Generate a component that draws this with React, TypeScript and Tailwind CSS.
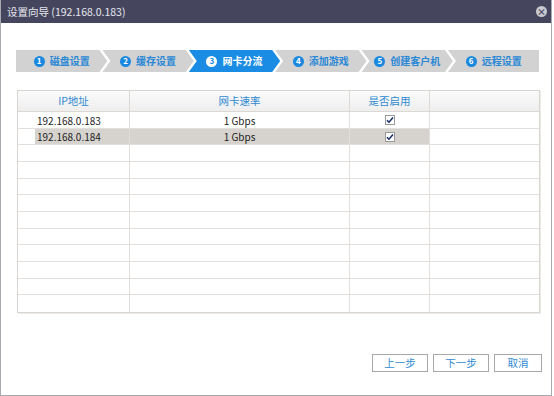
import React from 'react';

const FONT = { fontFamily: '"Noto Sans CJK SC", "Noto Sans", sans-serif' };

const steps = ['磁盘设置', '缓存设置', '网卡分流', '添加游戏', '创建客户机', '远程设置'];
const ACTIVE = 2;

const rows = [
  { ip: '192.168.0.183', speed: '1 Gbps', on: true },
  { ip: '192.168.0.184', speed: '1 Gbps', on: true },
];
const rowHeights = [17, 16, 17, 17, 16, 17, 17, 16, 17, 17, 16, 17];

function Check() {
  return (
    <span className="flex h-[10px] w-[10px] items-center justify-center border border-[#9a9a9a] bg-white">
      <svg width="8" height="8" viewBox="0 0 8 8">
        <path d="M1 4.2 L3 6.2 L7 1.6" fill="none" stroke="#1c2f6e" strokeWidth="1.6" />
      </svg>
    </span>
  );
}

function Step({ label, index }: { label: string; index: number }) {
  const active = index === ACTIVE;
  const first = index === 0;
  const last = index === steps.length - 1;
  const shape = first
    ? '[clip-path:polygon(0_0,calc(100%-8px)_0,100%_50%,calc(100%-8px)_100%,0_100%)]'
    : last
      ? '[clip-path:polygon(0_0,100%_0,100%_100%,0_100%,8px_50%)]'
      : '[clip-path:polygon(0_0,calc(100%-8px)_0,100%_50%,calc(100%-8px)_100%,0_100%,8px_50%)]';
  return (
    <div
      className={`flex h-[22px] w-[91.4px] shrink-0 items-center justify-center gap-[5px] ${first ? '' : '-ml-[5px]'} ${shape} ${
        active ? 'bg-[#1b8ce4]' : 'bg-[#d2d2d2]'
      }`}
    >
      <span
        className={`flex h-[11px] w-[11px] items-center justify-center rounded-full text-[8px] font-bold leading-none ${
          active ? 'bg-white text-[#1b8ce4]' : 'bg-[#1b88e0] text-white'
        }`}
      >
        {index + 1}
      </span>
      <span className={`text-[10px] font-bold leading-none ${active ? 'text-white' : 'text-[#2a88d6]'}`}>{label}</span>
    </div>
  );
}

export default function App() {
  return (
    <div className="h-[396px] w-[554px] bg-white" style={FONT}>
      <div className="flex h-[396px] w-[552px] flex-col border-b border-l border-r border-[#a9a9b0] bg-white">
        {/* title bar */}
        <div className="flex h-[23px] shrink-0 items-center justify-between bg-[#45465e] pl-[6px] pr-[4px]">
          <span className="text-[10.5px] text-[#e6e6ee]">设置向导 (192.168.0.183)</span>
          <span className="flex h-[11px] w-[11px] items-center justify-center rounded-full bg-[#c9c9cf] text-[9px] font-bold leading-none text-[#45465e]">
            ×
          </span>
        </div>

        <div className="ml-[15px] mt-[27px] flex w-[523px]">
          {steps.map((s, i) => (
            <Step key={s} label={s} index={i} />
          ))}
        </div>

        {/* table */}
        <div className="ml-[16px] mt-[18px] w-[523px] border border-[#d9d5d1] shadow-[1px_1px_0_#ecebea]">
          <div className="flex h-[21px] border-b border-[#dcd8d4] bg-gradient-to-b from-[#fbfbfb] to-[#eeeeee] text-[10.5px] text-[#2f8ad2]">
            <div className="flex w-[112px] items-center justify-center border-r border-[#dcd8d4]">IP地址</div>
            <div className="flex w-[220px] items-center justify-center border-r border-[#dcd8d4]">网卡速率</div>
            <div className="flex w-[80px] items-center justify-center border-r border-[#dcd8d4]">是否启用</div>
            <div className="flex-1" />
          </div>
          {rowHeights.map((h, i) => {
            const r = rows[i];
            const sel = i === 1;
            return (
              <div
                key={i}
                className={`flex text-[10px] text-[#222] ${i < rowHeights.length - 1 ? 'border-b border-[#e2dedb]' : ''}`}
                style={{ height: h }}
              >
                <div className="flex w-[112px] border-r border-[#e2dedb]">
                  <div className="w-[17px]" />
                  <div className={`flex flex-1 items-center pl-[2px] ${sel ? 'bg-[#d6d3ce]' : ''}`}>{r?.ip}</div>
                </div>
                <div
                  className={`flex w-[220px] items-center justify-center border-r border-[#e2dedb] ${sel ? 'bg-[#d6d3ce]' : ''}`}
                >
                  {r?.speed}
                </div>
                <div
                  className={`flex w-[80px] items-center justify-center border-r border-[#e2dedb] ${sel ? 'bg-[#d6d3ce]' : ''}`}
                >
                  {r?.on && <Check />}
                </div>
                <div className="flex-1" />
              </div>
            );
          })}
        </div>

        {/* buttons */}
        <div className="ml-[371px] mt-[41px] flex gap-[5px] text-[10.5px] text-[#2f8ad2]">
          <button className="flex h-[18px] w-[56px] items-center justify-center border border-[#a8a8a8] bg-white">上一步</button>
          <button className="flex h-[18px] w-[56px] items-center justify-center border border-[#a8a8a8] bg-white">下一步</button>
          <button className="flex h-[18px] w-[48px] items-center justify-center border border-[#a8a8a8] bg-white">取消</button>
        </div>
      </div>
    </div>
  );
}
